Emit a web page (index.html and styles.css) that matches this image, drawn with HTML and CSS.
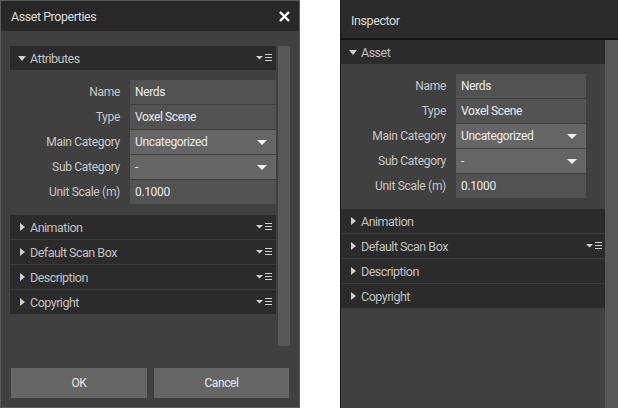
FILE: index.html
```html
<!doctype html>
<html>

<head>
    <meta charset="utf-8">
    <title>Asset Properties</title>
    <link rel="stylesheet" href="styles.css">
</head>

<body>
    <div class="screen">
        <div class="dialog">
            <div class="dialog-title">
                <span>Asset Properties</span>
                <svg class="close" width="11" height="11" viewBox="0 0 11 11">
                    <path d="M1 1 L10 10 M10 1 L1 10" stroke="#fff" stroke-width="2.4" />
                </svg>
            </div>
            <div class="dialog-body">
                <div class="scroll">
                    <div class="sections">
                        <div class="section-head open">
                            <span class="arrow"><svg width="8" height="5" viewBox="0 0 8 5"><polygon points="0,0 8,0 4,5" fill="#d0d0d0" /></svg></span>
                            <span class="head-text">Attributes</span>
                            <svg class="menu" width="16" height="8" viewBox="0 0 16 8"><polygon points="0,2 7,2 3.5,5.5" fill="#d0d0d0" /><path d="M9 0.5 H16 M9 3.5 H16 M9 6.5 H16" stroke="#d0d0d0" stroke-width="1" /></svg>
                        </div>
                        <div class="props">
                            <div class="prop"><label>Name</label><div class="field">Nerds</div></div>
                            <div class="prop"><label>Type</label><div class="field">Voxel Scene</div></div>
                            <div class="prop"><label>Main Category</label><div class="field select">Uncategorized<svg width="10" height="5" viewBox="0 0 10 5"><polygon points="0,0 10,0 5,5" fill="#f0f0f0" /></svg></div></div>
                            <div class="prop"><label>Sub Category</label><div class="field select">-<svg width="10" height="5" viewBox="0 0 10 5"><polygon points="0,0 10,0 5,5" fill="#f0f0f0" /></svg></div></div>
                            <div class="prop"><label>Unit Scale (m)</label><div class="field">0.1000</div></div>
                        </div>
                        <div class="section-head">
                            <span class="arrow"><svg width="5" height="8" viewBox="0 0 5 8"><polygon points="0,0 5,4 0,8" fill="#d0d0d0" /></svg></span>
                            <span class="head-text">Animation</span>
                            <svg class="menu" width="16" height="8" viewBox="0 0 16 8"><polygon points="0,2 7,2 3.5,5.5" fill="#d0d0d0" /><path d="M9 0.5 H16 M9 3.5 H16 M9 6.5 H16" stroke="#d0d0d0" stroke-width="1" /></svg>
                        </div>
                        <div class="section-head">
                            <span class="arrow"><svg width="5" height="8" viewBox="0 0 5 8"><polygon points="0,0 5,4 0,8" fill="#d0d0d0" /></svg></span>
                            <span class="head-text">Default Scan Box</span>
                            <svg class="menu" width="16" height="8" viewBox="0 0 16 8"><polygon points="0,2 7,2 3.5,5.5" fill="#d0d0d0" /><path d="M9 0.5 H16 M9 3.5 H16 M9 6.5 H16" stroke="#d0d0d0" stroke-width="1" /></svg>
                        </div>
                        <div class="section-head">
                            <span class="arrow"><svg width="5" height="8" viewBox="0 0 5 8"><polygon points="0,0 5,4 0,8" fill="#d0d0d0" /></svg></span>
                            <span class="head-text">Description</span>
                            <svg class="menu" width="16" height="8" viewBox="0 0 16 8"><polygon points="0,2 7,2 3.5,5.5" fill="#d0d0d0" /><path d="M9 0.5 H16 M9 3.5 H16 M9 6.5 H16" stroke="#d0d0d0" stroke-width="1" /></svg>
                        </div>
                        <div class="section-head">
                            <span class="arrow"><svg width="5" height="8" viewBox="0 0 5 8"><polygon points="0,0 5,4 0,8" fill="#d0d0d0" /></svg></span>
                            <span class="head-text">Copyright</span>
                            <svg class="menu" width="16" height="8" viewBox="0 0 16 8"><polygon points="0,2 7,2 3.5,5.5" fill="#d0d0d0" /><path d="M9 0.5 H16 M9 3.5 H16 M9 6.5 H16" stroke="#d0d0d0" stroke-width="1" /></svg>
                        </div>
                    </div>
                    <div class="scrollbar"></div>
                </div>
            </div>
            <div class="dialog-footer">
                <button type="button" class="btn-ok">OK</button>
                <button type="button" class="btn-cancel">Cancel</button>
            </div>
        </div>

        <div class="inspector">
            <div class="inspector-title">Inspector</div>
            <div class="inspector-body">
                <div class="sections">
                    <div class="section-head open">
                        <span class="arrow"><svg width="8" height="5" viewBox="0 0 8 5"><polygon points="0,0 8,0 4,5" fill="#d0d0d0" /></svg></span>
                        <span class="head-text">Asset</span>
                    </div>
                    <div class="props">
                        <div class="prop"><label>Name</label><div class="field">Nerds</div></div>
                        <div class="prop"><label>Type</label><div class="field">Voxel Scene</div></div>
                        <div class="prop"><label>Main Category</label><div class="field select">Uncategorized<svg width="10" height="5" viewBox="0 0 10 5"><polygon points="0,0 10,0 5,5" fill="#f0f0f0" /></svg></div></div>
                        <div class="prop"><label>Sub Category</label><div class="field select">-<svg width="10" height="5" viewBox="0 0 10 5"><polygon points="0,0 10,0 5,5" fill="#f0f0f0" /></svg></div></div>
                        <div class="prop"><label>Unit Scale (m)</label><div class="field">0.1000</div></div>
                    </div>
                    <div class="section-head">
                        <span class="arrow"><svg width="5" height="8" viewBox="0 0 5 8"><polygon points="0,0 5,4 0,8" fill="#d0d0d0" /></svg></span>
                        <span class="head-text">Animation</span>
                    </div>
                    <div class="section-head">
                        <span class="arrow"><svg width="5" height="8" viewBox="0 0 5 8"><polygon points="0,0 5,4 0,8" fill="#d0d0d0" /></svg></span>
                        <span class="head-text">Default Scan Box</span>
                        <svg class="menu" width="16" height="8" viewBox="0 0 16 8"><polygon points="0,2 7,2 3.5,5.5" fill="#d0d0d0" /><path d="M9 0.5 H16 M9 3.5 H16 M9 6.5 H16" stroke="#d0d0d0" stroke-width="1" /></svg>
                    </div>
                    <div class="section-head">
                        <span class="arrow"><svg width="5" height="8" viewBox="0 0 5 8"><polygon points="0,0 5,4 0,8" fill="#d0d0d0" /></svg></span>
                        <span class="head-text">Description</span>
                    </div>
                    <div class="section-head">
                        <span class="arrow"><svg width="5" height="8" viewBox="0 0 5 8"><polygon points="0,0 5,4 0,8" fill="#d0d0d0" /></svg></span>
                        <span class="head-text">Copyright</span>
                    </div>
                </div>
                <div class="scrollbar"></div>
            </div>
        </div>
    </div>
</body>

</html>
```

FILE: styles.css
```css
* {
    box-sizing: border-box;
}

body {
    margin: 0;
    background: #fff;
    font-family: Roboto, "Liberation Sans", sans-serif;
    font-size: 12px;
    letter-spacing: -0.35px;
    color: #c8c8c8;
}

.screen {
    display: flex;
    gap: 40px;
    width: 618px;
    height: 408px;
}

/* dialog on the left */

.dialog {
    width: 300px;
    height: 408px;
    background: #404040;
    border: 1px solid #5c5c5c;
    display: flex;
    flex-direction: column;
}

.dialog-title {
    height: 30px;
    background: #282828;
    display: flex;
    align-items: center;
    justify-content: space-between;
    padding: 0 9px 0 10px;
    font-size: 12.5px;
    letter-spacing: -0.45px;
    color: #dcdcdc;
}

.dialog-body {
    padding: 15px 9px 0 9px;
}

.scroll {
    display: flex;
    gap: 2px;
    height: 300px;
}

.scroll .sections {
    width: 266px;
}

.scroll .scrollbar {
    width: 12px;
    background: #575757;
}

.dialog-footer {
    margin-top: auto;
    display: flex;
    gap: 7px;
    padding: 0 9px 9px 10px;
}

.dialog-footer button {
    height: 30px;
    border: none;
    background: #666;
    color: #e8e8e8;
    font: inherit;
    font-size: 12px;
    letter-spacing: -0.4px;
}

.btn-ok {
    width: 136px;
}

.btn-cancel {
    width: 135px;
}

/* sections */

.section-head {
    height: 25px;
    background: #2b2b2b;
    display: flex;
    align-items: center;
    padding: 0 4px 0 6px;
    border-bottom: 1px solid #3b3b3b;
    color: #c0c0c0;
    font-size: 12.5px;
    letter-spacing: -0.5px;
}

.section-head.open,
.section-head:last-child {
    height: 24px;
    border-bottom: none;
}

.arrow {
    width: 12px;
    display: flex;
    justify-content: center;
    margin-right: 2px;
}

.head-text {
    flex: 1;
}

.menu {
    display: block;
}

.props {
    padding: 10px 0 10px 0;
    background: #404040;
}

.prop {
    display: flex;
    align-items: center;
    height: 24px;
    margin-bottom: 1px;
}

.prop label {
    width: 110px;
    text-align: right;
    margin-right: 10px;
    color: #c8c8c8;
    letter-spacing: -0.3px;
}

.field {
    flex: 1;
    height: 24px;
    background: #525252;
    color: #ececec;
    display: flex;
    align-items: center;
    justify-content: space-between;
    padding: 0 9px 0 5px;
}

.field.select {
    background: #656565;
}

/* inspector on the right */

.inspector {
    width: 278px;
    height: 408px;
    background: #404040;
    border-left: 1px solid #1a1a1a;
    display: flex;
    flex-direction: column;
}

.inspector-title {
    height: 40px;
    background: #2b2b2b;
    border-bottom: 2px solid #141414;
    padding: 3px 0 0 10px;
    display: flex;
    align-items: center;
    color: #dcdcdc;
    font-size: 12.5px;
    letter-spacing: -0.4px;
}

.inspector-body {
    flex: 1;
    display: flex;
}

.inspector-body .sections {
    flex: 1;
}

.inspector-body .scrollbar {
    width: 13px;
    background: #575757;
}

.inspector .section-head {
    padding: 0 3px 0 6px;
}

.inspector .prop label {
    width: 105px;
}

.inspector .props {
    padding-right: 19px;
}
```
